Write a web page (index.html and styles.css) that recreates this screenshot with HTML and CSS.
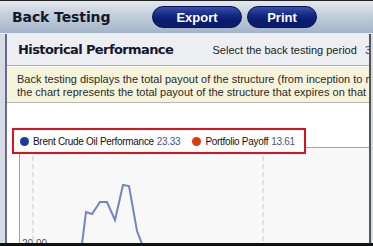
FILE: index.html
```html
<!DOCTYPE html>
<html lang="en">
<head>
    <meta charset="UTF-8">
    <title>Back Testing</title>
    <link rel="stylesheet" href="styles.css">
</head>
<body>
    <div class="window">
        <div class="header">
            <div class="title">Back Testing</div>
            <button class="pill export">Export</button>
            <button class="pill print">Print</button>
        </div>
        <div class="panel">
            <div class="section-head">
                <h3>Historical Performance</h3>
                <span class="period">Select the back testing period <b>3</b></span>
            </div>
            <div class="info">
                Back testing displays the total payout of the structure (from inception to maturity) over time.<br>
                the chart represents the total payout of the structure that expires on that date.
            </div>
            <div class="chart">
                <div class="legend">
                    <span class="dot blue"></span>Brent Crude Oil Performance <span class="val">23.33</span>
                    <span class="dot red"></span>Portfolio Payoff <span class="val">13.61</span>
                </div>
                <div class="plot">
                    <svg width="360" height="110">
                        <line x1="13" y1="0" x2="13" y2="110" stroke="#c8c8c8" stroke-dasharray="5,3"/>
                        <line x1="243" y1="0" x2="243" y2="110" stroke="#c8c8c8" stroke-dasharray="5,3"/>
                        <polyline fill="none" stroke="#7683bd" stroke-width="2"
                            points="62,96 66,64 72,66 80,54 87,54 95,72 103,37 109,38 117,83 122,96"/>
                        <text x="2" y="99" class="axis">20.00</text>
                    </svg>
                </div>
            </div>
        </div>
    </div>
</body>
</html>
```

FILE: styles.css
```css
body {
    margin: 0;
    background: #fff;
}
.window {
    width: 373px;
    height: 246px;
    box-sizing: border-box;
    border-top: 1px solid #222;
    border-bottom: 3px solid #111;
    background: #d6dbe4;
    overflow: hidden;
    display: flex;
    flex-direction: column;
}
.header {
    height: 32px;
    flex-shrink: 0;
    display: flex;
    align-items: center;
    padding-left: 12px;
    background: linear-gradient(#e2e8ef, #c3cedb 45%, #a3b3c9);
    border-bottom: 1px solid #e9edf3;
}
.title {
    width: 140px;
    font-family: "DejaVu Sans", sans-serif;
    font-weight: bold;
    font-size: 14px;
    letter-spacing: -0.1px;
    color: #15182a;
}
.pill {
    height: 22px;
    border: 1px solid #0b1250;
    border-radius: 11px;
    background: linear-gradient(#3a4fa8, #132a86 40%, #0a1a6c 70%, #0c1d70);
    color: #fff;
    font-family: "Liberation Sans", Arial, sans-serif;
    font-weight: bold;
    font-size: 13px;
    padding: 0;
}
.export {
    width: 90px;
    margin-right: 5px;
}
.print {
    width: 70px;
}
.panel {
    flex: 1;
    margin-left: 5px;
    margin-right: 2px;
    border-left: 2px solid #676b8c;
    border-right: 2px solid #555;
    background: #fff;
    display: flex;
    flex-direction: column;
}
.section-head {
    height: 31px;
    flex-shrink: 0;
    display: flex;
    align-items: center;
    justify-content: space-between;
    background: #eceef2;
    border-bottom: 1px solid #a9adb6;
    padding-left: 11px;
    white-space: nowrap;
    overflow: hidden;
}
.section-head h3 {
    margin: 0;
    font-family: "DejaVu Sans", sans-serif;
    font-size: 13px;
    letter-spacing: -0.6px;
    color: #15182a;
}
.period {
    font-family: "Liberation Sans", Arial, sans-serif;
    font-size: 11px;
    color: #222;
    margin-right: -2px;
}
.period b {
    font-weight: normal;
    color: #2a4aa0;
    margin-left: 5px;
}
.info {
    height: 36px;
    flex-shrink: 0;
    margin-top: 1px;
    box-sizing: border-box;
    padding: 6px 0 0 10px;
    background: #f7f4dc;
    border-bottom: 1px solid #b8b8b8;
    font-family: "Liberation Sans", Arial, sans-serif;
    font-size: 11px;
    line-height: 13px;
    color: #2a2a2a;
    white-space: nowrap;
    overflow: hidden;
}
.chart {
    flex: 1;
    position: relative;
}
.plot {
    margin: 44px 0 0 12px;
    height: 100%;
    background: #f8f8f8;
    border-top: 1px solid #a4a4a4;
    border-left: 1px solid #a4a4a4;
}
.plot svg {
    display: block;
}
.axis {
    font-family: "Liberation Sans", Arial, sans-serif;
    font-size: 10px;
    fill: #555;
}
.legend {
    position: absolute;
    left: 5px;
    top: 25px;
    width: 294px;
    height: 26px;
    box-sizing: border-box;
    border: 2px solid #e0101c;
    background: #fff;
    display: flex;
    align-items: center;
    padding-left: 6px;
    font-family: "Liberation Sans", Arial, sans-serif;
    font-size: 10px;
    letter-spacing: -0.3px;
    color: #111;
    white-space: nowrap;
}
.dot {
    width: 9px;
    height: 9px;
    border-radius: 50%;
    margin-right: 4px;
}
.blue {
    background: #1c3a9c;
}
.red {
    background: #e0380e;
    margin-left: 12px;
}
.val {
    color: #3c5a8c;
    margin-left: 3px;
}
```
